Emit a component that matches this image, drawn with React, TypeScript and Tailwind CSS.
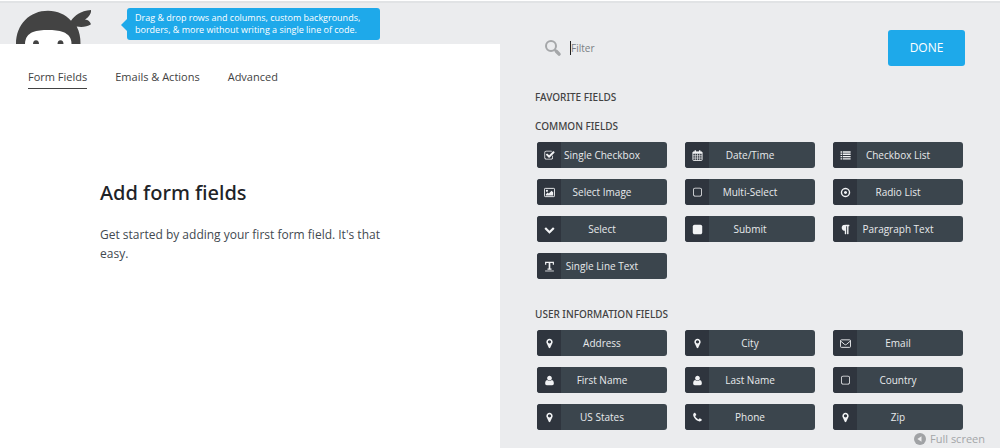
import React, { useState } from 'react';

interface IconProps {
  className?: string;
}

interface Field {
  label: string;
  icon: React.FC<IconProps>;
}

interface Section {
  title: string;
  fields: Field[];
}

// Single-path glyphs share the same 1792 grid
const glyph = (d: string): React.FC<IconProps> => ({ className }) => (
  <svg viewBox="0 0 1792 1792" fill="currentColor" className={className} aria-hidden="true">
    <path d={d} />
  </svg>
);

const CheckSquare = glyph('M1472 930v318q0 119-84.5 203.5t-203.5 84.5h-832q-119 0-203.5-84.5t-84.5-203.5v-832q0-119 84.5-203.5t203.5-84.5h832q63 0 117 25 15 7 18 23 3 17-9 29l-49 49q-10 10-23 10-3 0-9-2-23-6-45-6h-832q-66 0-113 47t-47 113v832q0 66 47 113t113 47h832q66 0 113-47t47-113v-254q0-13 9-22l64-64q10-10 23-10 6 0 12 3 20 8 20 29zm231-489l-814 814q-24 24-57 24t-57-24l-430-430q-24-24-24-57t24-57l110-110q24-24 57-24t57 24l263 263 647-647q24-24 57-24t57 24l110 110q24 24 24 57t-24 57z');
const SquareOutline = glyph('M1312 256h-832q-66 0-113 47t-47 113v832q0 66 47 113t113 47h832q66 0 113-47t47-113v-832q0-66-47-113t-113-47zm288 160v832q0 119-84.5 203.5t-203.5 84.5h-832q-119 0-203.5-84.5t-84.5-203.5v-832q0-119 84.5-203.5t203.5-84.5h832q119 0 203.5 84.5t84.5 203.5z');
const Square = glyph('M1664 416v960q0 119-84.5 203.5t-203.5 84.5h-960q-119 0-203.5-84.5t-84.5-203.5v-960q0-119 84.5-203.5t203.5-84.5h960q119 0 203.5 84.5t84.5 203.5z');
const DotCircle = glyph('M1152 896q0 106-75 181t-181 75-181-75-75-181 75-181 181-75 181 75 75 181zm-256-544q-148 0-273 73t-198 198-73 273 73 273 198 198 273 73 273-73 198-198 73-273-73-273-198-198-273-73zm768 544q0 209-103 385.5t-279.5 279.5-385.5 103-385.5-103-279.5-279.5-103-385.5 103-385.5 279.5-279.5 385.5-103 385.5 103 279.5 279.5 103 385.5z');
const ChevronDown = glyph('M1683 808l-742 741q-19 19-45 19t-45-19l-742-741q-19-19-19-45.5t19-45.5l166-165q19-19 45-19t45 19l531 531 531-531q19-19 45-19t45 19l166 165q19 19 19 45.5t-19 45.5z');
const Paragraph = glyph('M1534 189v73q0 29-18.5 61t-42.5 32q-50 0-54 1-26 6-32 31-3 11-3 64v1152q0 25-18 43t-43 18h-108q-25 0-43-18t-18-43v-1218h-143v1218q0 25-17.5 43t-43.5 18h-108q-26 0-43.5-18t-17.5-43v-496q-147-12-245-59-126-58-192-179-64-117-64-259 0-166 88-286 88-118 209-159 111-37 417-37h479q25 0 43 18t18 43z');
const MapMarker = glyph('M1152 640q0-106-75-181t-181-75-181 75-75 181 75 181 181 75 181-75 75-181zm256 0q0 109-33 179l-364 774q-16 33-47.5 52t-67.5 19-67.5-19-46.5-52l-365-774q-33-70-33-179 0-212 150-362t362-150 362 150 150 362z');
const User = glyph('M1600 1405q0 120-73 189.5t-194 69.5h-874q-121 0-194-69.5t-73-189.5q0-53 3.5-103.5t14-109 26.5-108.5 43-97.5 62-81 85.5-53.5 111.5-20q9 0 42 21.5t74.5 48 108 48 133.5 21.5 133.5-21.5 108-48 74.5-48 42-21.5q61 0 111.5 20t85.5 53.5 62 81 43 97.5 26.5 108.5 14 109 3.5 103.5zm-320-893q0 159-112.5 271.5t-271.5 112.5-271.5-112.5-112.5-271.5 112.5-271.5 271.5-112.5 271.5 112.5 112.5 271.5z');
const Phone = glyph('M1600 1240q0 27-10 70.5t-21 68.5q-21 50-122 106-94 51-186 51-27 0-52.5-3.5t-57.5-12.5-47.5-14.5-55.5-20.5-49-18q-98-35-175-83-128-79-264.5-215.5t-215.5-264.5q-48-77-83-175-3-9-18-49t-20.5-55.5-14.5-47.5-12.5-57.5-3.5-52.5q0-92 51-186 56-101 106-122 25-11 68.5-21t70.5-10q14 0 21 3 18 6 53 76 11 19 30 54t35 63.5 31 53.5q3 4 17.5 25t21.5 35.5 7 28.5q0 20-28.5 50t-62 55-62 53-28.5 46q0 9 5 22.5t8.5 20.5 14 24 11.5 19q76 137 174 235t235 174q2 1 19 11.5t24 14 20.5 8.5 22.5 5q18 0 46-28.5t53-62 55-62 50-28.5q14 0 28.5 7t35.5 21.5 25 17.5q25 15 53.5 31t63.5 35 54 30q70 35 76 53 3 7 3 21z');

const Search: React.FC<IconProps> = ({ className }) => (
  <svg viewBox="0 0 18 18" className={className} fill="none" stroke="currentColor" aria-hidden="true">
    <circle cx="7" cy="7" r="5" strokeWidth="2" />
    <path d="M10.800 10.800l1.500 1.500" strokeWidth="2" />
    <path d="M12.300 12.300l2.800 2.800" strokeWidth="3.400" strokeLinecap="round" />
  </svg>
);

const Picture: React.FC<IconProps> = ({ className }) => (
  <svg viewBox="0 0 12 12" className={className} aria-hidden="true">
    <rect x="0.5" y="1.5" width="11" height="9" rx="0.8" fill="none" stroke="currentColor" />
    <circle cx="3.2" cy="4.2" r="1.2" fill="currentColor" />
    <path d="M2 9.3V8l2-2 1.2 1.2L8.3 4 10 5.8v3.5z" fill="currentColor" />
  </svg>
);

const Calendar: React.FC<IconProps> = ({ className }) => (
  <svg viewBox="0 0 12 12" className={className} fill="none" stroke="currentColor" aria-hidden="true">
    <rect x="1" y="2" width="10" height="9.4" rx="0.6" strokeWidth="1" />
    <path d="M1 3.2h10" strokeWidth="1.8" />
    <path d="M1 6.3h10M1 8.8h10M3.6 4v7.4M6 4v7.4M8.400 4v7.400" strokeWidth="0.7" />
    <path d="M3.6 0.4v2.6M8.4 0.4v2.6" strokeWidth="1.5" />
  </svg>
);

const List: React.FC<IconProps> = ({ className }) => (
  <svg viewBox="0 0 12 12" className={className} stroke="currentColor" strokeWidth="1.5" aria-hidden="true">
    <path d="M0.6 2.2h1.6M0.6 4.7h1.6M0.6 7.2h1.6M0.6 9.7h1.6M3 2.2h8.6M3 4.7h8.6M3 7.2h8.6M3 9.7h8.6" />
  </svg>
);

// Slab T with a faint measure line under it
const TextWidth: React.FC<IconProps> = ({ className }) => (
  <svg viewBox="0 0 12 12" className={className} fill="none" stroke="currentColor" aria-hidden="true">
    <path d="M1.8 4V1.500h8.400V4M3.800 8.800h4.400" strokeWidth="1.300" />
    <path d="M6 1.500v7.300" strokeWidth="1.800" />
    <path d="M1.200 10.900h9.600" strokeWidth="0.900" />
  </svg>
);

const Envelope: React.FC<IconProps> = ({ className }) => (
  <svg viewBox="0 0 12 12" className={className} fill="none" stroke="currentColor" aria-hidden="true">
    <rect x="0.5" y="2" width="11" height="8.2" rx="1" />
    <path d="M0.8 3.4L5 7q1 0.8 2 0l4.2-3.6" />
  </svg>
);

const NinjaLogo: React.FC<IconProps> = ({ className }) => (
  <svg viewBox="0 0 76 34" className={className} role="img" aria-label="Ninja Forms">
    <path d="M0 34C0 14 14 0.7 32 0.7c9.500 0 17.500 3.800 23 10C59 5.500 64 1 75 0c0.500 3-2 7-6 9.500 3.500 0.500 5 2 6 4.700-4 2.600-9 3.200-14.300 2.300C63.500 22 64.500 27 64.500 34z" fill="#434343" />
    <path d="M9 34c0-6 3-10 8-12 8-2.600 22-2.600 30 0 5.500 2 8.500 6 8.500 12z" fill="#fff" />
    <ellipse cx="20" cy="34" rx="3" ry="3.800" fill="#434343" />
    <ellipse cx="44.500" cy="34" rx="3" ry="3.800" fill="#434343" />
  </svg>
);

const TABS = ['Form Fields', 'Emails & Actions', 'Advanced'];

const SECTIONS: Section[] = [
  {
    title: 'Common Fields',
    fields: [
      { label: 'Single Checkbox', icon: CheckSquare },
      { label: 'Date/Time', icon: Calendar },
      { label: 'Checkbox List', icon: List },
      { label: 'Select Image', icon: Picture },
      { label: 'Multi-Select', icon: SquareOutline },
      { label: 'Radio List', icon: DotCircle },
      { label: 'Select', icon: ChevronDown },
      { label: 'Submit', icon: Square },
      { label: 'Paragraph Text', icon: Paragraph },
      { label: 'Single Line Text', icon: TextWidth },
    ],
  },
  {
    title: 'User Information Fields',
    fields: [
      { label: 'Address', icon: MapMarker },
      { label: 'City', icon: MapMarker },
      { label: 'Email', icon: Envelope },
      { label: 'First Name', icon: User },
      { label: 'Last Name', icon: User },
      { label: 'Country', icon: SquareOutline },
      { label: 'US States', icon: MapMarker },
      { label: 'Phone', icon: Phone },
      { label: 'Zip', icon: MapMarker },
    ],
  },
];

const SectionTitle: React.FC<{ children: React.ReactNode }> = ({ children }) => (
  <h2 className="font-['Noto_Sans',sans-serif] text-[10px] leading-[18px] font-medium uppercase">{children}</h2>
);

const FieldButton: React.FC<{ field: Field }> = ({ field }) => {
  const Icon = field.icon;
  return (
    <button className="flex h-[26px] overflow-hidden rounded-[3px] bg-[#3b454d] text-[10px] text-[#e8eaec]">
      <span className="flex h-full w-6 shrink-0 items-center justify-center bg-[#2f353e] text-[#f1f2f4]">
        <Icon className="size-[11px]" />
      </span>
      <span className="flex-1 pr-6 leading-[27px] whitespace-nowrap">{field.label}</span>
    </button>
  );
};

export default function App() {
  const [activeTab, setActiveTab] = useState(TABS[0]);
  const [filter, setFilter] = useState('');

  const matches = (field: Field) => field.label.toLowerCase().includes(filter.toLowerCase());

  return (
    <div className="relative grid min-h-screen grid-cols-2 border-t border-white bg-[#ebecee] font-['Open_Sans','Noto_Sans',sans-serif] text-[#424242]">
      {/* Form builder */}
      <main className="flex flex-col border-t-2 border-[#e1e3e5]">
        <header className="flex h-[41px] items-end gap-[35px] pl-4">
          <NinjaLogo className="h-[34px] w-[76px] shrink-0" />
          <div className="relative mb-1 w-[253px] rounded-[3px] bg-[#1ea9ea] px-2 py-1 text-[9px] leading-[12px] whitespace-nowrap text-white">
            <span className="absolute top-[11px] -left-[6px] border-y-6 border-r-6 border-y-transparent border-r-[#1ea9ea]" />
            Drag &amp; drop rows and columns, custom backgrounds,
            <br />
            borders, &amp; more without writing a single line of code.
          </div>
        </header>

        <div className="flex-1 bg-white">
          <nav className="flex gap-7 px-7 pt-[25px]">
            {TABS.map(tab => (
              <button
                key={tab}
                onClick={() => setActiveTab(tab)}
                className={`border-b pb-[3px] text-[11px] leading-4 ${tab === activeTab ? 'border-[#424242]' : 'border-transparent'}`}
              >
                {tab}
              </button>
            ))}
          </nav>

          <div className="px-[100px] pt-[90px]">
            <h1 className="font-['Noto_Sans',sans-serif] text-[20px] leading-7 font-medium text-[#1e2327]">Add form fields</h1>
            <p className="pt-[18px] text-[12px] leading-[19px] text-[#424950]">
              Get started by adding your first form field. It's that easy.
            </p>
          </div>
        </div>
      </main>

      {/* Field drawer */}
      <aside className="border-t-2 border-[#e1e3e5] px-[35px] pt-[27px] pb-4">
        <div className="flex items-center justify-between">
          <label className="flex items-center gap-2 pl-[9px]">
            <Search className="size-[18px] text-[#a5a7a9]" />
            <input
              type="text"
              aria-label="Filter"
              placeholder="Filter"
              value={filter}
              onChange={e => setFilter(e.target.value)}
              className="h-[14px] w-40 border-l border-[#222] bg-transparent text-[10px] outline-none placeholder:text-[#7a7f84]"
            />
          </label>
          <button className="h-9 w-[77px] rounded-[3px] bg-[#1ea9ea] text-[12px] text-white">DONE</button>
        </div>

        <div className="pt-[22px]">
          <SectionTitle>Favorite Fields</SectionTitle>
        </div>

        {SECTIONS.map((section, i) => (
          <section key={section.title} className={i === 0 ? 'pt-[11px]' : 'pt-[26px]'}>
            <SectionTitle>{section.title}</SectionTitle>
            <div className="grid grid-cols-3 gap-x-[18px] gap-y-[11px] px-[2px] pt-[7px]">
              {section.fields.filter(matches).map(field => (
                <FieldButton key={field.label} field={field} />
              ))}
            </div>
          </section>
        ))}
      </aside>

      <button className="absolute right-[15px] bottom-[1px] flex items-center gap-1 text-[11px] leading-4 text-[#a3a5a8]">
        <svg viewBox="0 0 12 12" className="size-3" aria-hidden="true">
          <circle cx="6" cy="6" r="6" fill="#a0a2a5" />
          <path d="M7.5 3.2v5.6L3.4 6z" fill="#ebecee" />
        </svg>
        Full screen
      </button>
    </div>
  );
}
